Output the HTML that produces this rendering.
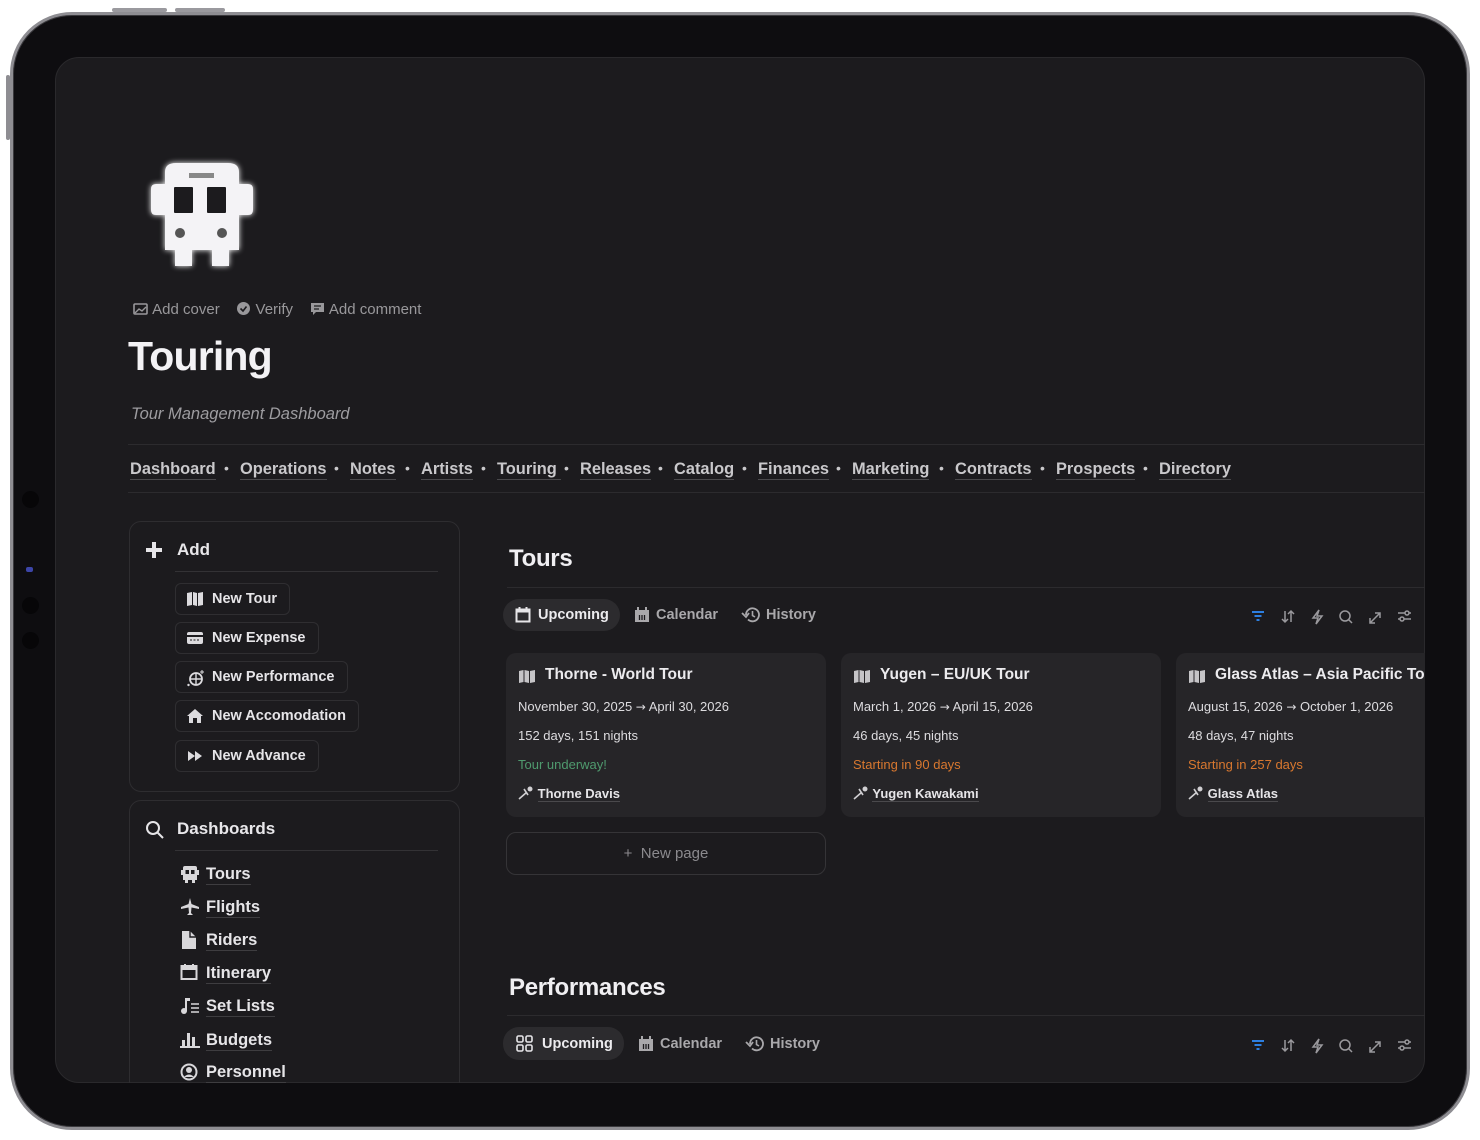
<!DOCTYPE html>
<html><head><meta charset="utf-8"><style>
*{margin:0;padding:0;box-sizing:border-box}
body{width:1480px;height:1140px;background:#fff;position:relative;overflow:hidden;font-family:"Liberation Sans",sans-serif;color:#e8e7ea}
.abs{position:absolute}
#dev{left:10px;top:12px;width:1460px;height:1118px;border-radius:62px;background:#0e0d10;border:3px solid #8e8d92;box-shadow:inset 0 0 0 1px #3a393d}
#scr{left:55px;top:57px;width:1370px;height:1026px;border-radius:24px;background:#1c1b1e;overflow:hidden;border:1px solid #2a292c}
.t{position:absolute;white-space:nowrap}
.nav{font-size:16.4px;font-weight:bold;color:#c9c8cb;top:460px;border-bottom:1px solid #4a494c;line-height:19px}
.dot{font-size:14px;color:#c9c8cb;top:460px}
.box{position:absolute;border:1px solid #2e2d30;border-radius:12px}
.btn{position:absolute;left:175px;height:32px;border:1px solid #2f2e31;border-radius:6px;font-size:14.5px;font-weight:bold;color:#e6e5e8;padding:0 12px 0 36px;line-height:30px}
.btn svg{position:absolute;left:10px;top:7px}
.dl{position:absolute;left:206px;font-size:16.5px;font-weight:bold;color:#e6e5e8;border-bottom:1px solid #3e3d40;line-height:20px}
.di{position:absolute;left:180px}
.card{position:absolute;top:653px;width:320px;height:164px;background:#262528;border-radius:10px}
.card .h{position:absolute;left:39px;top:13px;font-size:15.5px;font-weight:bold;color:#ecebee}
.card .hi{position:absolute;left:12px;top:16px}
.card .l{position:absolute;left:12px;font-size:13px;color:#dddcdf}
.ar{font-family:"DejaVu Sans",sans-serif;font-size:12px}
.tab{position:absolute;font-size:14.5px;font-weight:bold;color:#a9a8ab}
.hr{position:absolute;height:1px;background:#2c2b2e}
</style></head><body>
<div class="abs" style="left:112px;top:8px;width:55px;height:4px;background:#9a999e;border-radius:2px"></div>
<div class="abs" style="left:175px;top:8px;width:50px;height:4px;background:#9a999e;border-radius:2px"></div>
<div class="abs" style="left:6px;top:75px;width:4px;height:65px;background:#8e8d92;border-radius:2px"></div>
<div id="dev" class="abs"></div>
<div class="abs" style="left:22px;top:491px;width:17px;height:17px;border-radius:50%;background:#070608"></div>
<div class="abs" style="left:26px;top:567px;width:7px;height:5px;border-radius:2px;background:#3c45a8"></div>
<div class="abs" style="left:22px;top:597px;width:17px;height:17px;border-radius:50%;background:#070608"></div>
<div class="abs" style="left:22px;top:632px;width:17px;height:17px;border-radius:50%;background:#070608"></div>
<div id="scr" class="abs"></div>

<!-- bus icon -->
<svg class="abs" style="left:145px;top:158px;filter:drop-shadow(0 0 3px #fff)" width="114" height="114" viewBox="0 0 114 114">
<path d="M20 14 Q20 5 31 5 H83 Q94 5 94 14 V26 H103 Q108 26 108 31 V52 Q108 57 103 57 H94 V92 H84 V108 H67 V92 H47 V108 H30 V92 H20 V57 H11 Q6 57 6 52 V31 Q6 26 11 26 H20 Z" fill="#f4f3f6"/>
<rect x="29" y="29" width="19" height="26" rx="1" fill="#1c1b1e"/><rect x="62" y="29" width="19" height="26" rx="1" fill="#1c1b1e"/>
<rect x="44" y="15" width="25" height="5" fill="#888"/>
<circle cx="35" cy="75" r="5" fill="#555"/><circle cx="77" cy="75" r="5" fill="#555"/>
</svg>

<div class="t" style="left:133px;top:301px;font-size:15px;color:#99989b">
<svg width="15" height="12" style="vertical-align:-1px"><rect x="1" y="1" width="13" height="10" rx="1" fill="none" stroke="#99989b" stroke-width="1.6"/><path d="M2 10 L6 6 L9 8 L13 4" stroke="#99989b" fill="none" stroke-width="1.4"/></svg>&nbsp;Add cover
&nbsp;&nbsp;&nbsp;<svg width="15" height="15" style="vertical-align:-2px"><circle cx="7.5" cy="7.5" r="6.5" fill="#99989b"/><path d="M4.5 7.5 L7 10 L10.5 5.5" stroke="#1c1b1e" stroke-width="1.6" fill="none"/></svg>&nbsp;Verify
&nbsp;&nbsp;&nbsp;<svg width="15" height="15" style="vertical-align:-2px"><path d="M1 2 H14 V11 H6 L3 14 V11 H1 Z" fill="#99989b"/><path d="M4 5 H11 M4 8 H9" stroke="#1c1b1e" stroke-width="1.3"/></svg>&nbsp;Add comment</div>
<div class="t" style="left:128px;top:333px;font-size:41px;font-weight:bold;color:#f3f2f5;letter-spacing:-0.8px">Touring</div>
<div class="t" style="left:131px;top:405px;font-size:16.5px;font-style:italic;color:#9d9ca0">Tour Management Dashboard</div>
<div class="hr" style="left:128px;top:444px;width:1297px"></div>
<div class="hr" style="left:128px;top:492px;width:1297px"></div>

<div class="t nav" style="left:130px">Dashboard</div><div class="t dot" style="left:224px">•</div>
<div class="t nav" style="left:240px">Operations</div><div class="t dot" style="left:334px">•</div>
<div class="t nav" style="left:350px">Notes</div><div class="t dot" style="left:405px">•</div>
<div class="t nav" style="left:421px">Artists</div><div class="t dot" style="left:481px">•</div>
<div class="t nav" style="left:497px">Touring&nbsp;</div><div class="t dot" style="left:564px">•</div>
<div class="t nav" style="left:580px">Releases</div><div class="t dot" style="left:658px">•</div>
<div class="t nav" style="left:674px">Catalog</div><div class="t dot" style="left:742px">•</div>
<div class="t nav" style="left:758px">Finances</div><div class="t dot" style="left:836px">•</div>
<div class="t nav" style="left:852px">Marketing</div><div class="t dot" style="left:939px">•</div>
<div class="t nav" style="left:955px">Contracts</div><div class="t dot" style="left:1040px">•</div>
<div class="t nav" style="left:1056px">Prospects</div><div class="t dot" style="left:1143px">•</div>
<div class="t nav" style="left:1159px">Directory</div>

<!-- Add box -->
<div class="box" style="left:129px;top:521px;width:331px;height:271px"></div>
<svg class="abs" style="left:145px;top:541px" width="18" height="18"><path d="M7 1 H11 V7 H17 V11 H11 V17 H7 V11 H1 V7 H7 Z" fill="#e6e5e8"/></svg>
<div class="t" style="left:177px;top:540px;font-size:17px;font-weight:bold">Add</div>
<div class="hr" style="left:175px;top:571px;width:263px;background:#333235"></div>
<div class="btn" style="top:583px"><svg width="18" height="16"><path d="M1 2 L6 1 V14 L1 15 Z M7 1 L11 2 V15 L7 14 Z M12 2 L17 1 V14 L12 15 Z" fill="#dcdbde"/></svg>New Tour</div>
<div class="btn" style="top:622px"><svg width="18" height="16"><rect x="1" y="2" width="16" height="12" rx="2" fill="#dcdbde"/><rect x="1" y="5" width="16" height="2" fill="#1c1b1e"/><path d="M4 10 H14" stroke="#1c1b1e" stroke-dasharray="2 1.5"/></svg>New Expense</div>
<div class="btn" style="top:661px"><svg width="20" height="18"><circle cx="10" cy="10" r="6" fill="none" stroke="#dcdbde" stroke-width="1.8"/><path d="M4 10 H16 M10 4 V16" stroke="#dcdbde" stroke-width="1.4"/><path d="M16 1 V5 M14 3 H18" stroke="#dcdbde"/><circle cx="2.5" cy="16" r="1.2" fill="#dcdbde"/></svg>New Performance</div>
<div class="btn" style="top:700px"><svg width="18" height="16"><path d="M9 1 L17 8 H15 V15 H11 V10 H7 V15 H3 V8 H1 Z" fill="#dcdbde"/></svg>New Accomodation</div>
<div class="btn" style="top:740px"><svg width="18" height="16"><path d="M2 3 L9 8 L2 13 Z M9 3 L16 8 L9 13 Z" fill="#dcdbde"/></svg>New Advance</div>

<!-- Dashboards box -->
<div class="box" style="left:129px;top:800px;width:331px;height:300px"></div>
<svg class="abs" style="left:145px;top:820px" width="20" height="20"><circle cx="8" cy="8" r="6" fill="none" stroke="#e6e5e8" stroke-width="2"/><path d="M12.5 12.5 L18 18" stroke="#e6e5e8" stroke-width="2"/></svg>
<div class="t" style="left:177px;top:819px;font-size:17px;font-weight:bold">Dashboards</div>
<div class="hr" style="left:175px;top:850px;width:263px;background:#333235"></div>
<svg class="di" style="top:865px" width="20" height="19"><path d="M3 3 Q3 1 5 1 H15 Q17 1 17 3 V5 H19 V10 H17 V15 H15 V18 H12 V15 H8 V18 H5 V15 H3 V10 H1 V5 H3 Z" fill="#d8d7da"/><rect x="5.5" y="5" width="3.5" height="4" fill="#1c1b1e"/><rect x="11" y="5" width="3.5" height="4" fill="#1c1b1e"/></svg>
<div class="dl" style="top:864px">Tours</div>
<svg class="di" style="top:897px" width="20" height="20"><path d="M10 1 L11.5 7 L19 10 V12 L11.5 10.5 L11 16 L13 18 H7 L9 16 L8.5 10.5 L1 12 V10 L8.5 7 Z" fill="#d8d7da"/></svg>
<div class="dl" style="top:897px">Flights</div>
<svg class="di" style="top:930px" width="18" height="20"><path d="M2 1 H10 L16 7 V19 H2 Z" fill="#d8d7da"/><path d="M10 1 V7 H16" fill="none" stroke="#1c1b1e" stroke-width="1.4"/></svg>
<div class="dl" style="top:930px">Riders</div>
<svg class="di" style="top:963px" width="18" height="18"><rect x="1.5" y="3" width="15" height="13" fill="none" stroke="#d8d7da" stroke-width="2"/><rect x="1.5" y="3" width="15" height="4" fill="#d8d7da"/><path d="M5 1 V4 M13 1 V4" stroke="#d8d7da" stroke-width="2"/></svg>
<div class="dl" style="top:963px">Itinerary</div>
<svg class="di" style="top:996px" width="20" height="20"><path d="M6 2 V15" stroke="#d8d7da" stroke-width="2"/><circle cx="4" cy="15" r="3" fill="#d8d7da"/><path d="M6 2 H10 V5 H6" fill="#d8d7da"/><path d="M11 8 H19 M11 12 H19 M11 16 H19" stroke="#d8d7da" stroke-width="1.6"/></svg>
<div class="dl" style="top:996px">Set Lists</div>
<svg class="di" style="top:1030px" width="20" height="18"><path d="M0 17 H20" stroke="#d8d7da" stroke-width="2"/><rect x="2" y="10" width="3" height="7" fill="#d8d7da"/><rect x="7" y="3" width="3" height="14" fill="#d8d7da"/><rect x="12" y="7" width="3" height="10" fill="#d8d7da"/></svg>
<div class="dl" style="top:1030px">Budgets</div>
<svg class="di" style="top:1063px" width="18" height="18"><circle cx="9" cy="9" r="7.5" fill="none" stroke="#d8d7da" stroke-width="2"/><circle cx="9" cy="7" r="3" fill="#d8d7da"/><path d="M4 14 Q9 9 14 14" fill="#d8d7da"/></svg>
<div class="dl" style="top:1062px">Personnel</div>

<!-- Tours -->
<div class="t" style="left:509px;top:545px;font-size:24px;font-weight:bold;color:#f0eff2;letter-spacing:-0.3px">Tours</div>
<div class="hr" style="left:507px;top:587px;width:918px"></div>
<div class="abs" style="left:503px;top:599px;width:117px;height:32px;border-radius:16px;background:#2c2b2e"></div>
<svg class="abs" style="left:515px;top:607px" width="16" height="16"><rect x="1.5" y="2.5" width="13" height="12" fill="none" stroke="#e6e5e8" stroke-width="2"/><rect x="1.5" y="2.5" width="13" height="3" fill="#e6e5e8"/><path d="M4.5 0 V3 M11.5 0 V3" stroke="#e6e5e8" stroke-width="2"/></svg>
<div class="tab" style="left:538px;top:607px;color:#ecebee">Upcoming</div>
<svg class="abs" style="left:634px;top:607px" width="16" height="16"><rect x="1" y="3" width="14" height="12" fill="#a9a8ab"/><path d="M4 0 V3 M12 0 V3" stroke="#a9a8ab" stroke-width="2"/><path d="M5.5 8 V13 M8 8 V13 M10.5 8 V13" stroke="#1c1b1e" stroke-width="1.3"/></svg>
<div class="tab" style="left:656px;top:607px">Calendar</div>
<svg class="abs" style="left:741px;top:606px" width="20" height="18"><path d="M5 9 A6.5 6.5 0 1 1 7 13.5" fill="none" stroke="#a9a8ab" stroke-width="1.8"/><path d="M1 7 L5 11 L8 7" fill="none" stroke="#a9a8ab" stroke-width="1.8"/><path d="M11.5 5 V9.5 L14 11" fill="none" stroke="#a9a8ab" stroke-width="1.6"/></svg>
<div class="tab" style="left:766px;top:607px">History</div>

<svg class="abs" style="left:1250px;top:608px" width="165" height="18" fill="none" stroke="#9a999d" stroke-width="1.5">
<path d="M2 4 H14 M4.5 8 H11.5 M6.5 12 H9.5" stroke="#2d7fe0" stroke-width="2"/>
<path d="M35 3 V14 M32 11 L35 14 L38 11 M41 14 V3 M38 6 L41 3 L44 6"/>
<path d="M69 2 L63 10 H68 L66 16 L72 8 H67 Z"/>
<circle cx="95" cy="8" r="5"/><path d="M98.5 11.5 L102 15"/>
<path d="M120 15 L130 5 M125 5 H130 V10 M120 10 V15 H125"/>
<path d="M148 5 H161 M148 11 H161"/><circle cx="157" cy="5" r="2" fill="#1c1b1e"/><circle cx="152" cy="11" r="2" fill="#1c1b1e"/>
</svg>

<div class="card" style="left:506px">
<svg class="hi" width="18" height="14"><path d="M1 2 L5.5 1 V13 L1 14 Z M6.5 1 L11 2 V14 L6.5 13 Z M12 2 L17 1 V13 L12 14 Z" fill="#c5c4c7"/></svg>
<div class="t h">Thorne - World Tour</div>
<div class="t l" style="top:46px">November 30, 2025 <span class="ar">→</span> April 30, 2026</div>
<div class="t l" style="top:75px">152 days, 151 nights</div>
<div class="t l" style="top:104px;color:#4f9a6e">Tour underway!</div>
<div class="t l" style="top:133px;font-weight:bold;color:#e6e5e8">
<svg width="16" height="14" style="vertical-align:-2px"><path d="M1 13 L9 6 M6 3 L10 9" stroke="#d0cfd2" stroke-width="1.6"/><circle cx="12" cy="3" r="2.5" fill="#d0cfd2"/></svg> <span style="border-bottom:1px solid #4a494c">Thorne Davis</span></div>
</div>
<div class="card" style="left:841px">
<svg class="hi" width="18" height="14"><path d="M1 2 L5.5 1 V13 L1 14 Z M6.5 1 L11 2 V14 L6.5 13 Z M12 2 L17 1 V13 L12 14 Z" fill="#c5c4c7"/></svg>
<div class="t h">Yugen – EU/UK Tour</div>
<div class="t l" style="top:46px">March 1, 2026 <span class="ar">→</span> April 15, 2026</div>
<div class="t l" style="top:75px">46 days, 45 nights</div>
<div class="t l" style="top:104px;color:#d9782f">Starting in 90 days</div>
<div class="t l" style="top:133px;font-weight:bold;color:#e6e5e8">
<svg width="16" height="14" style="vertical-align:-2px"><path d="M1 13 L9 6 M6 3 L10 9" stroke="#d0cfd2" stroke-width="1.6"/><circle cx="12" cy="3" r="2.5" fill="#d0cfd2"/></svg> <span style="border-bottom:1px solid #4a494c">Yugen Kawakami</span></div>
</div>
<div class="card" style="left:1176px;overflow:hidden;width:249px;border-radius:10px 0 0 10px">
<svg class="hi" width="18" height="14"><path d="M1 2 L5.5 1 V13 L1 14 Z M6.5 1 L11 2 V14 L6.5 13 Z M12 2 L17 1 V13 L12 14 Z" fill="#c5c4c7"/></svg>
<div class="t h">Glass Atlas – Asia Pacific Tour</div>
<div class="t l" style="top:46px">August 15, 2026 <span class="ar">→</span> October 1, 2026</div>
<div class="t l" style="top:75px">48 days, 47 nights</div>
<div class="t l" style="top:104px;color:#d9782f">Starting in 257 days</div>
<div class="t l" style="top:133px;font-weight:bold;color:#e6e5e8">
<svg width="16" height="14" style="vertical-align:-2px"><path d="M1 13 L9 6 M6 3 L10 9" stroke="#d0cfd2" stroke-width="1.6"/><circle cx="12" cy="3" r="2.5" fill="#d0cfd2"/></svg> <span style="border-bottom:1px solid #4a494c">Glass Atlas</span></div>
</div>
<div class="abs" style="left:506px;top:832px;width:320px;height:43px;border:1px solid #353437;border-radius:10px;text-align:center;line-height:41px;font-size:15px;color:#8b8a8e">+&nbsp; New page</div>

<!-- Performances -->
<div class="t" style="left:509px;top:974px;font-size:24px;font-weight:bold;color:#f0eff2;letter-spacing:-0.3px">Performances</div>
<div class="hr" style="left:507px;top:1015px;width:918px"></div>
<div class="abs" style="left:503px;top:1027px;width:121px;height:33px;border-radius:16px;background:#2c2b2e"></div>
<svg class="abs" style="left:516px;top:1035px" width="18" height="18" fill="none" stroke="#e6e5e8" stroke-width="1.6"><rect x="1" y="1" width="6" height="6" rx="1.5"/><rect x="10" y="1" width="6" height="6" rx="1.5"/><rect x="1" y="10" width="6" height="6" rx="1.5"/><rect x="10" y="10" width="6" height="6" rx="1.5"/></svg>
<div class="tab" style="left:542px;top:1036px;color:#ecebee">Upcoming</div>
<svg class="abs" style="left:638px;top:1036px" width="16" height="16"><rect x="1" y="3" width="14" height="12" fill="#a9a8ab"/><path d="M4 0 V3 M12 0 V3" stroke="#a9a8ab" stroke-width="2"/><path d="M5.5 8 V13 M8 8 V13 M10.5 8 V13" stroke="#1c1b1e" stroke-width="1.3"/></svg>
<div class="tab" style="left:660px;top:1036px">Calendar</div>
<svg class="abs" style="left:745px;top:1035px" width="20" height="18"><path d="M5 9 A6.5 6.5 0 1 1 7 13.5" fill="none" stroke="#a9a8ab" stroke-width="1.8"/><path d="M1 7 L5 11 L8 7" fill="none" stroke="#a9a8ab" stroke-width="1.8"/><path d="M11.5 5 V9.5 L14 11" fill="none" stroke="#a9a8ab" stroke-width="1.6"/></svg>
<div class="tab" style="left:770px;top:1036px">History</div>
<svg class="abs" style="left:1250px;top:1037px" width="165" height="18" fill="none" stroke="#9a999d" stroke-width="1.5">
<path d="M2 4 H14 M4.5 8 H11.5 M6.5 12 H9.5" stroke="#2d7fe0" stroke-width="2"/>
<path d="M35 3 V14 M32 11 L35 14 L38 11 M41 14 V3 M38 6 L41 3 L44 6"/>
<path d="M69 2 L63 10 H68 L66 16 L72 8 H67 Z"/>
<circle cx="95" cy="8" r="5"/><path d="M98.5 11.5 L102 15"/>
<path d="M120 15 L130 5 M125 5 H130 V10 M120 10 V15 H125"/>
<path d="M148 5 H161 M148 11 H161"/><circle cx="157" cy="5" r="2" fill="#1c1b1e"/><circle cx="152" cy="11" r="2" fill="#1c1b1e"/>
</svg>
<!-- bottom bezel cover -->
<div class="abs" style="left:55px;top:1083px;width:1370px;height:30px;background:#0e0d10"></div>
</body></html>
